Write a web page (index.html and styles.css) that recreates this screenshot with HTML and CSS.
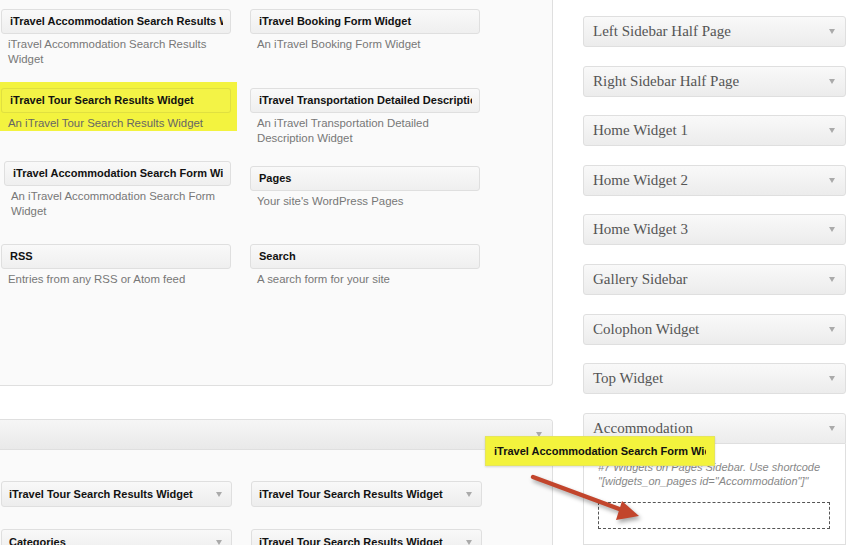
FILE: index.html
```html
<!DOCTYPE html>
<html>
<head>
<meta charset="utf-8">
<link rel="stylesheet" href="styles.css">
</head>
<body>
<div class="page">
  <div class="main">
    <section class="panel avail">
      <div class="wgrid">
        <div class="widget"><div class="wbox"><span class="clip">iTravel Accommodation Search Results Widget</span></div><p class="wdesc">iTravel Accommodation Search Results Widget</p></div>
        <div class="widget"><div class="wbox"><span class="clip">iTravel Booking Form Widget</span></div><p class="wdesc">An iTravel Booking Form Widget</p></div>
        <div class="widget hl"><div class="wbox"><span class="clip">iTravel Tour Search Results Widget</span></div><p class="wdesc">An iTravel Tour Search Results Widget</p></div>
        <div class="widget"><div class="wbox"><span class="clip">iTravel Transportation Detailed Description Widget</span></div><p class="wdesc">An iTravel Transportation Detailed Description Widget</p></div>
        <div class="widget nudged"><div class="wbox"><span class="clip">iTravel Accommodation Search Form Widget</span></div><p class="wdesc">An iTravel Accommodation Search Form Widget</p></div>
        <div class="widget"><div class="wbox"><span class="clip">Pages</span></div><p class="wdesc">Your site's WordPress Pages</p></div>
        <div class="widget"><div class="wbox"><span class="clip">RSS</span></div><p class="wdesc">Entries from any RSS or Atom feed</p></div>
        <div class="widget"><div class="wbox"><span class="clip">Search</span></div><p class="wdesc">A search form for your site</p></div>
      </div>
    </section>
    <section class="panel inactive">
      <div class="phead"><span class="caret"></span></div>
      <div class="pbody">
        <div class="igrid">
          <div class="ibox"><span class="ititle">iTravel Tour Search Results Widget</span><span class="caret"></span></div>
          <div class="ibox"><span class="ititle">iTravel Tour Search Results Widget</span><span class="caret"></span></div>
          <div class="ibox"><span class="ititle">Categories</span><span class="caret"></span></div>
          <div class="ibox"><span class="ititle">iTravel Tour Search Results Widget</span><span class="caret"></span></div>
        </div>
      </div>
    </section>
  </div>
  <aside class="sidebars">
    <div class="sb"><span>Left Sidebar Half Page</span><span class="caret"></span></div>
    <div class="sb"><span>Right Sidebar Half Page</span><span class="caret"></span></div>
    <div class="sb"><span>Home Widget 1</span><span class="caret"></span></div>
    <div class="sb"><span>Home Widget 2</span><span class="caret"></span></div>
    <div class="sb"><span>Home Widget 3</span><span class="caret"></span></div>
    <div class="sb"><span>Gallery Sidebar</span><span class="caret"></span></div>
    <div class="sb"><span>Colophon Widget</span><span class="caret"></span></div>
    <div class="sb"><span>Top Widget</span><span class="caret"></span></div>
    <div class="sbopen">
      <div class="sb sbhead"><span>Accommodation</span><span class="caret"></span></div>
      <div class="sbbody">
        <p class="sbdesc">#7 Widgets on Pages Sidebar. Use shortcode<br>"[widgets_on_pages id="Accommodation"]"</p>
        <div class="drop"></div>
      </div>
    </div>
  </aside>
  <div class="dragging"><span class="clip">iTravel Accommodation Search Form Widget</span></div>
  <svg class="arrow" width="130" height="60" viewBox="0 0 130 60">
    <line x1="8" y1="9" x2="97" y2="42" stroke="#c2452c" stroke-width="4.5" stroke-linecap="round"/>
    <polygon points="97,33 114,48 91,52" fill="#c2452c"/>
  </svg>
</div>
</body>
</html>
```
FILE: styles.css
```css
html, body {
  margin: 0;
  padding: 0;
  background: #ffffff;
}
body {
  font-family: "Liberation Sans", Arial, sans-serif;
  color: #222;
}
.page {
  position: relative;
  width: 856px;
  height: 545px;
  overflow: hidden;
  display: flex;
  align-items: flex-start;
}
.main {
  width: 553px;
  flex: none;
  display: flex;
  flex-direction: column;
  height: 545px;
}
.panel {
  box-sizing: border-box;
  border: 1px solid #dfdfdf;
  background: #fafafa;
}
.avail {
  height: 386px;
  flex: none;
  border-top: none;
  border-left: none;
  border-bottom-right-radius: 4px;
}
.wgrid {
  display: grid;
  grid-template-columns: 230px 230px;
  grid-template-rows: 79px 78px 78px 78px;
  column-gap: 19px;
  padding: 9px 0 0 1px;
}
.widget {
  align-self: start;
}
.clip {
  display: block;
  overflow: hidden;
  white-space: nowrap;
}
.wbox {
  box-sizing: border-box;
  height: 25px;
  border: 1px solid #dfdfdf;
  border-radius: 3px;
  background: linear-gradient(#f9f9f9, #efefef);
  font-weight: bold;
  font-size: 11px;
  line-height: 23px;
  padding: 0 7px 0 8px;
  color: #111;
}
.wdesc {
  margin: 3px 0 0;
  padding-left: 7px;
  font-size: 11.4px;
  line-height: 15px;
  color: #777;
}
.hl {
  background: #f3f33f;
  margin: -6px -6px 0 -1px;
  padding: 6px 6px 0 1px;
}
.hl .wbox {
  background: rgba(255, 255, 255, 0.04);
  border-color: rgba(0, 0, 0, 0.08);
}
.hl .wdesc {
  color: #666;
}
.nudged {
  margin: -5px 0 0 3px;
}
.inactive {
  margin-top: 33px;
  flex: 1;
  border-left: none;
  border-bottom: none;
  border-top-right-radius: 4px;
  display: flex;
  flex-direction: column;
}
.phead {
  box-sizing: border-box;
  height: 30px;
  flex: none;
  border-bottom: 1px solid #dfdfdf;
  background: linear-gradient(#f6f6f6, #e9e9e9);
  display: flex;
  justify-content: flex-end;
  align-items: center;
  padding-right: 10px;
  border-top-right-radius: 3px;
}
.pbody {
  flex: 1;
  padding: 31px 0 0 1px;
}
.igrid {
  display: grid;
  grid-template-columns: 231px 231px;
  column-gap: 19px;
  row-gap: 22px;
}
.ibox {
  box-sizing: border-box;
  height: 26px;
  border: 1px solid #dfdfdf;
  border-radius: 3px;
  background: linear-gradient(#f9f9f9, #ededed);
  display: flex;
  align-items: center;
  justify-content: space-between;
  padding: 0 9px 0 7px;
}
.ititle {
  font-weight: bold;
  font-size: 11px;
  color: #111;
  white-space: nowrap;
}
.caret {
  width: 0;
  height: 0;
  border-left: 3px solid transparent;
  border-right: 3px solid transparent;
  border-top: 5px solid #aaa;
  flex: none;
}
.sidebars {
  width: 263px;
  margin-left: 30px;
  padding-top: 16px;
  display: flex;
  flex-direction: column;
  gap: 18.6px;
  height: 545px;
  box-sizing: border-box;
  flex: none;
}
.sb {
  box-sizing: border-box;
  height: 31px;
  flex: none;
  border: 1px solid #dfdfdf;
  border-radius: 3px;
  background: linear-gradient(#f9f9f9, #ececec);
  display: flex;
  align-items: center;
  justify-content: space-between;
  padding: 0 10px 0 9px;
  font-family: "Liberation Serif", "DejaVu Serif", serif;
  font-size: 15px;
  color: #555;
}
.sbopen {
  flex: 1;
  display: flex;
  flex-direction: column;
}
.sbhead {
  border-radius: 3px 3px 0 0;
}
.sbbody {
  flex: 1;
  background: #ffffff;
  border: 1px solid #dfdfdf;
  border-top: none;
  padding: 16px 15px 0 14px;
}
.sbdesc {
  margin: 0;
  font-style: italic;
  font-size: 11px;
  line-height: 14px;
  color: #888;
}
.drop {
  margin-top: 14px;
  height: 27px;
  box-sizing: border-box;
  border: 1px dashed #555;
}
.dragging {
  position: absolute;
  left: 485px;
  top: 436px;
  width: 230px;
  height: 30px;
  box-sizing: border-box;
  background: #f3f33d;
  border: 1px solid #e6e65a;
  box-shadow: 0 1px 2px rgba(0, 0, 0, 0.15);
  font-weight: bold;
  font-size: 11px;
  line-height: 28px;
  padding: 0 8px 0 8px;
  color: #111;
}
.arrow {
  position: absolute;
  left: 525px;
  top: 468px;
  filter: drop-shadow(2px 3px 2px rgba(0, 0, 0, 0.35));
}
```
